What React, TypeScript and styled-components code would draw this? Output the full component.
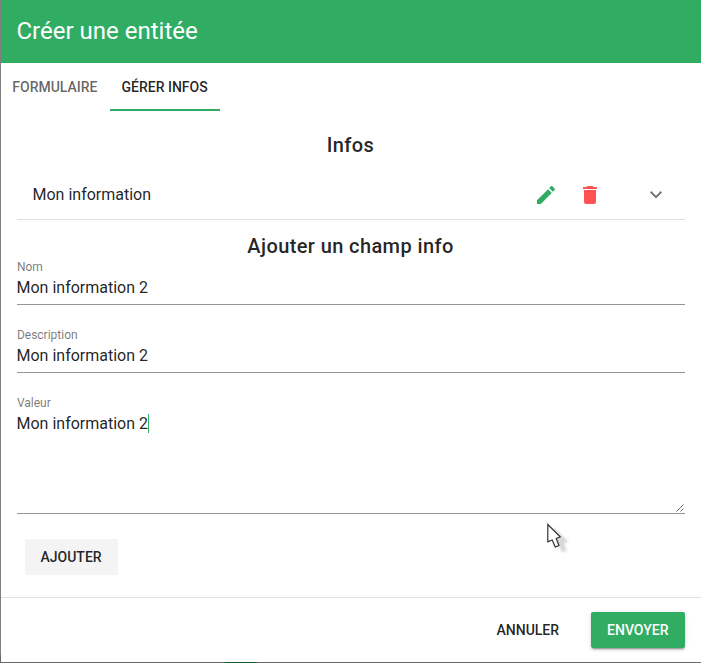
import React from 'react';
import styled, { createGlobalStyle, css } from 'styled-components';

const GlobalStyle = createGlobalStyle`
  *, *::before, *::after { box-sizing: border-box; }
  body {
    margin: 0;
    background: #686868;
    font-family: Roboto, sans-serif;
    color: rgba(0, 0, 0, 0.87);
    overflow: hidden;
  }
`;

const green = '#30ac63';

const Backdrop = styled.div`
  position: relative;
  width: 701px;
  height: 663px;
  padding: 0 0.5px 1px 0.5px;
  background: linear-gradient(90deg, #7f7f7f 1px, transparent 1px) 0 0 / 100% 655px no-repeat,
    linear-gradient(#116034, #116034) 225px 662px / 32px 1px no-repeat,
    #686868;
`;

const Dialog = styled.div`
  display: flex;
  flex-direction: column;
  height: 662px;
  background: #fff;
`;

const Header = styled.header`
  display: flex;
  align-items: center;
  height: 63px;
  padding: 0 16px 1px;
  background: ${green};
  color: #fff;
  font-size: 24px;
`;

const Tabs = styled.nav`
  display: flex;
  height: 48px;
`;

const Tab = styled.button<{ $active?: boolean }>`
  height: 48px;
  padding: 2px 12.2px 0 11.8px;
  border: 0;
  border-bottom: 2px solid ${p => (p.$active ? green : 'transparent')};
  background: none;
  color: ${p => (p.$active ? 'rgba(0,0,0,0.87)' : 'rgba(0,0,0,0.62)')};
  font: 500 14px Roboto, sans-serif;
`;

const Content = styled.main`
  display: flex;
  flex-direction: column;
  height: 486px;
  padding: 20px 16px 0;
`;

const Heading = styled.h3`
  margin: 0;
  font-size: 20px;
  font-weight: 500;
  line-height: 28px;
  letter-spacing: 0.02em;
  text-align: center;
`;

const PanelRow = styled.div`
  display: flex;
  align-items: center;
  height: 50px;
  margin: 11px 0 12px;
  padding: 0 16.5px 0 16px;
  border-bottom: 1px solid #e0e0e0;
  font-size: 16px;
`;

const PanelName = styled.span`
  flex: 1;
`;

const Icon = styled.svg<{ $gap?: number }>`
  width: 24px;
  height: 24px;
  margin-right: ${p => p.$gap ?? 0}px;
  fill: currentColor;
`;

const Field = styled.label<{ $height: number }>`
  display: flex;
  flex-direction: column;
  flex: none;
  height: ${p => p.$height}px;
  margin-bottom: 23px;
  border-bottom: 1px solid #949494;
`;

const FieldLabel = styled.span`
  height: 14px;
  padding-left: 0.4px;
  font-size: 12px;
  line-height: 14px;
  color: rgba(0, 0, 0, 0.54);
`;

const fieldText = css`
  font: 400 16px/19px Roboto, sans-serif;
  color: rgba(0, 0, 0, 0.87);
`;

const Input = styled.input`
  ${fieldText}
  height: 20px;
  margin-top: 3px;
  padding: 0;
  border: 0;
  outline: 0;
  background: none;
`;

const TextArea = styled.div`
  ${fieldText}
  display: flex;
  flex: 1;
  margin-top: 4px;
`;

const Caret = styled.span`
  width: 1px;
  height: 19px;
  background: ${green};
`;

const ResizeGrip = styled.svg`
  width: 8px;
  height: 8px;
  margin: auto 0.5px 1px auto;
`;

const Button = styled.button<{ $tone?: 'flat' | 'grey' | 'primary' }>`
  height: 36px;
  padding: 0 16px;
  border: 0;
  border-radius: 2px;
  font: 500 14px Roboto, sans-serif;
  color: rgba(0, 0, 0, 0.87);
  background: ${p => (p.$tone === 'grey' ? '#f4f4f4' : 'transparent')};
  ${p =>
    p.$tone === 'primary' &&
    css`
      background: ${green};
      color: #fff;
      box-shadow: 0 3px 1px -2px rgba(0, 0, 0, 0.2), 0 2px 2px rgba(0, 0, 0, 0.14),
        0 1px 5px rgba(0, 0, 0, 0.12);
    `}
`;

const FormAction = styled.div`
  padding: 2px 8px;
`;

const Footer = styled.footer`
  display: flex;
  flex: 1;
  align-items: center;
  justify-content: flex-end;
  gap: 16px;
  padding: 0 16px;
  border-top: 1px solid #e0e0e0;
`;

const Pointer = styled.svg`
  position: absolute;
  left: 546px;
  top: 523px;
  width: 26px;
  height: 34px;
`;

const PointerShadow = styled.path`
  fill: #000;
  opacity: 0.15;
  stroke: #000;
  stroke-width: 1.5;
  filter: blur(0.8px);
`;

const pointerPath = 'M1.8 1.5V18.8L6.2 17L9.3 24L13 22.5L10.2 15.5L14.2 13.9Z';

export default function App() {
  return (
    <>
      <GlobalStyle />
      <Backdrop>
        <Dialog>
          <Header>Créer une entitée</Header>
          <Tabs>
            <Tab>FORMULAIRE</Tab>
            <Tab $active>GÉRER INFOS</Tab>
          </Tabs>
          <Content>
            <Heading>Infos</Heading>
            <PanelRow>
              <PanelName>Mon information</PanelName>
              <Icon viewBox="0 0 24 24" color={green} $gap={20}>
                <path d="M20.71 7.04c.39-.39.39-1.04 0-1.41l-2.34-2.34c-.37-.39-1.02-.39-1.41 0l-1.84 1.83 3.75 3.75M3 17.25V21h3.75L17.81 9.93l-3.75-3.75L3 17.25z" />
              </Icon>
              <Icon viewBox="0 0 24 24" color="#ff5252" $gap={42}>
                <path d="M19 4h-3.5l-1-1h-5l-1 1H5v2h14M6 19a2 2 0 0 0 2 2h8a2 2 0 0 0 2-2V7H6v12z" />
              </Icon>
              <Icon viewBox="0 0.5 24 24" color="#757575">
                <path d="M7.41 8.58 12 13.17l4.59-4.59L18 10l-6 6-6-6 1.41-1.42z" />
              </Icon>
            </PanelRow>
            <Heading>Ajouter un champ info</Heading>
            <Field $height={45}>
              <FieldLabel>Nom</FieldLabel>
              <Input defaultValue="Mon information 2" />
            </Field>
            <Field $height={45}>
              <FieldLabel>Description</FieldLabel>
              <Input defaultValue="Mon information 2" />
            </Field>
            <Field $height={118}>
              <FieldLabel>Valeur</FieldLabel>
              <TextArea>
                Mon information 2<Caret />
                <ResizeGrip viewBox="0 0 8 8" stroke="#555" strokeWidth="0.9">
                  <path d="M0.5 7.5 7.5 0.5M4.5 7.5 7.5 4.5" />
                </ResizeGrip>
              </TextArea>
            </Field>
            <FormAction>
              <Button $tone="grey">AJOUTER</Button>
            </FormAction>
          </Content>
          <Footer>
            <Button>ANNULER</Button>
            <Button $tone="primary">ENVOYER</Button>
          </Footer>
        </Dialog>
        <Pointer viewBox="0 0 26 34">
          <PointerShadow d={pointerPath} transform="translate(7 4.5)" />
          <path d={pointerPath} fill="#fff" stroke="#333" strokeWidth="1.2" />
        </Pointer>
      </Backdrop>
    </>
  );
}
